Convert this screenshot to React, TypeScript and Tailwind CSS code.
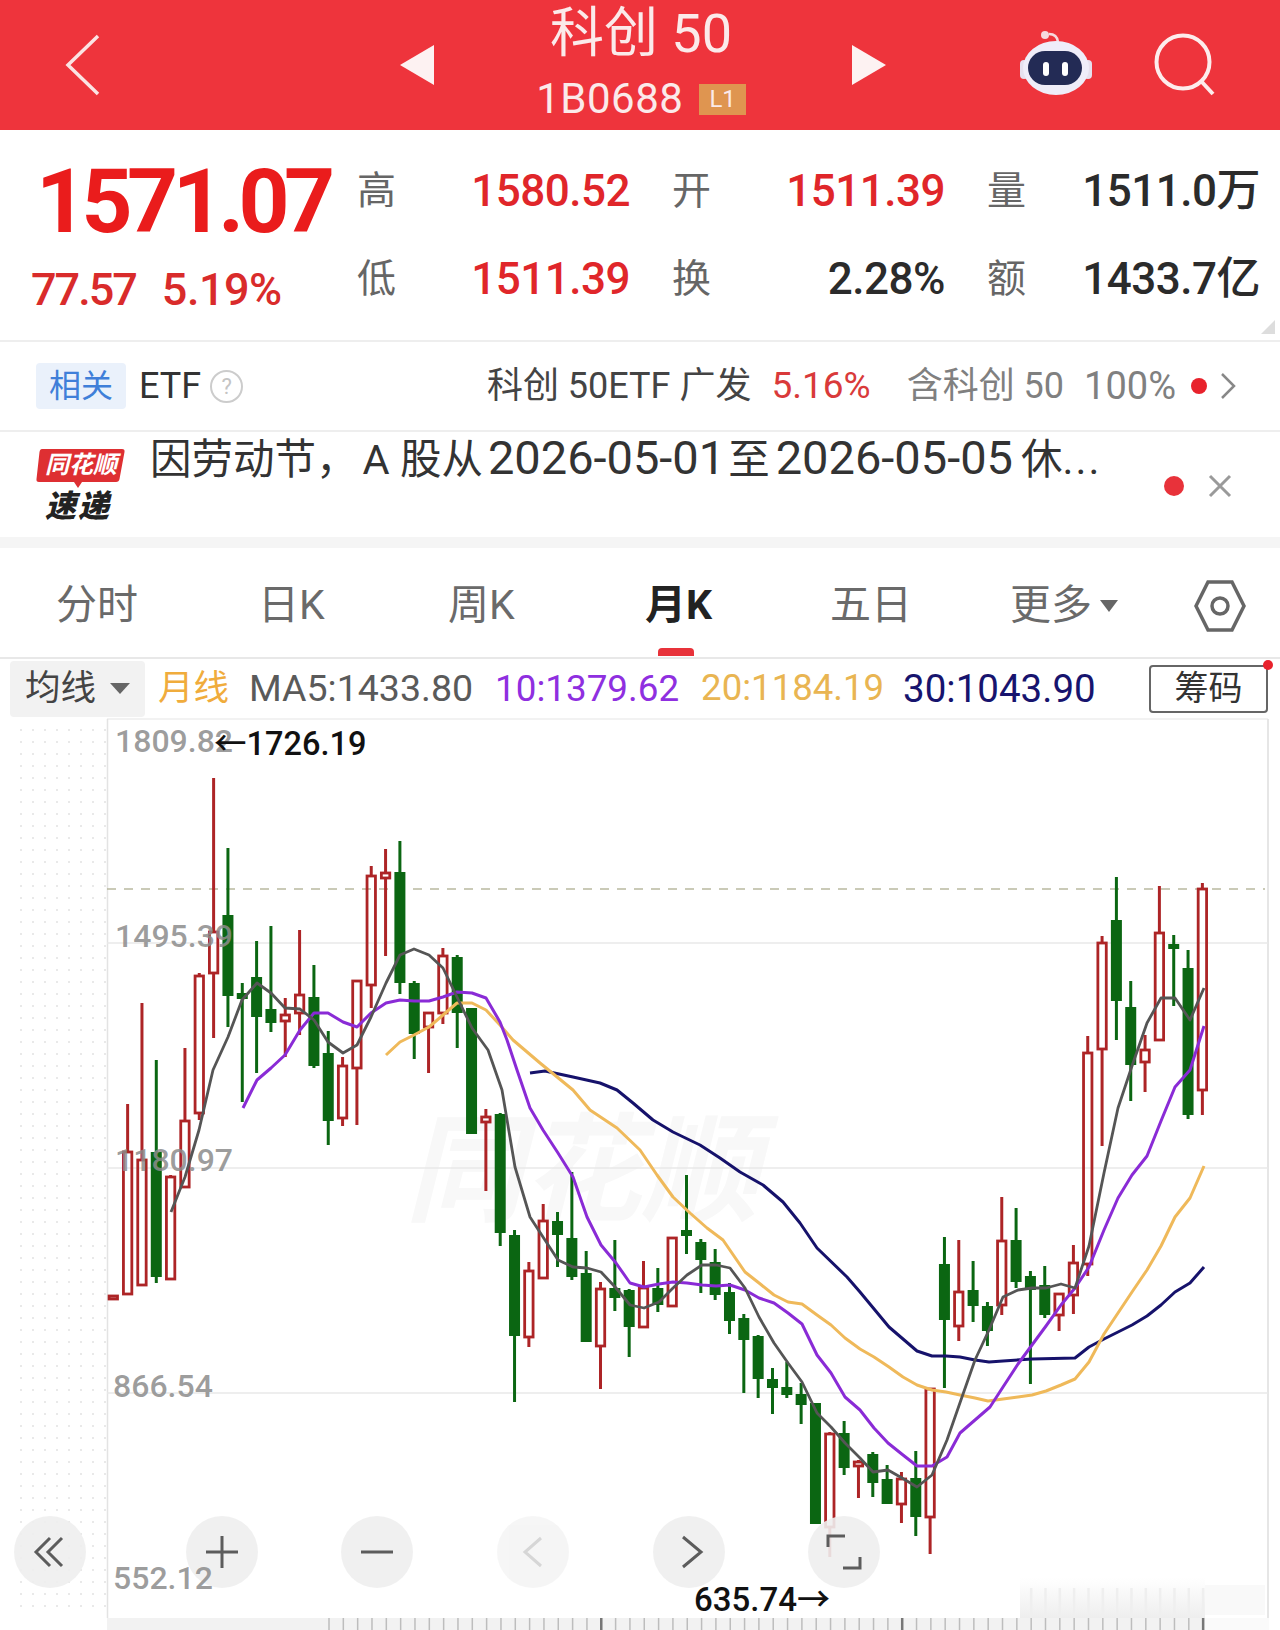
import React from 'react';

type Candle = [number, number, number, number]; // high, top, bottom, low

// up = true draws the hollow red candle, false the filled green one
const candles: Array<[boolean, ...Candle]> = [
  [true, 1296, 1296, 1299, 1299],
  [true, 1104, 1152, 1294, 1294],
  [true, 1003, 1160, 1285, 1285],
  [false, 1060, 1152, 1277, 1283],
  [true, 1175, 1177, 1279, 1279],
  [true, 1048, 1121, 1187, 1187],
  [true, 973, 976, 1113, 1120],
  [true, 778, 932, 973, 1038],
  [false, 848, 915, 996, 1027],
  [false, 983, 993, 999, 1102],
  [false, 941, 977, 1017, 1073],
  [false, 926, 1009, 1023, 1032],
  [true, 998, 1015, 1021, 1057],
  [true, 930, 995, 1013, 1035],
  [false, 965, 997, 1066, 1068],
  [false, 1031, 1053, 1121, 1145],
  [true, 1057, 1066, 1118, 1126],
  [true, 980, 981, 1068, 1125],
  [true, 866, 876, 985, 1008],
  [true, 849, 873, 878, 956],
  [false, 841, 872, 983, 994],
  [false, 981, 983, 1034, 1059],
  [true, 1013, 1013, 1027, 1073],
  [true, 948, 956, 1013, 1024],
  [false, 955, 957, 1013, 1048],
  [false, 1008, 1008, 1134, 1134],
  [true, 1109, 1117, 1122, 1191],
  [false, 1113, 1114, 1233, 1246],
  [false, 1230, 1235, 1336, 1402],
  [true, 1262, 1271, 1337, 1347],
  [true, 1204, 1221, 1278, 1278],
  [false, 1212, 1221, 1235, 1267],
  [false, 1172, 1238, 1277, 1280],
  [false, 1251, 1273, 1342, 1342],
  [true, 1282, 1289, 1346, 1389],
  [false, 1240, 1288, 1298, 1311],
  [false, 1289, 1290, 1327, 1357],
  [true, 1261, 1288, 1327, 1328],
  [false, 1268, 1288, 1305, 1312],
  [true, 1238, 1238, 1306, 1307],
  [false, 1175, 1230, 1236, 1254],
  [false, 1239, 1242, 1260, 1293],
  [false, 1249, 1262, 1295, 1300],
  [false, 1283, 1292, 1321, 1334],
  [false, 1314, 1318, 1340, 1393],
  [false, 1335, 1336, 1379, 1398],
  [false, 1368, 1379, 1388, 1414],
  [false, 1362, 1387, 1395, 1398],
  [false, 1383, 1394, 1405, 1424],
  [false, 1403, 1403, 1524, 1524],
  [true, 1432, 1434, 1527, 1557],
  [false, 1421, 1433, 1468, 1475],
  [true, 1460, 1462, 1466, 1498],
  [false, 1452, 1454, 1483, 1497],
  [false, 1465, 1479, 1504, 1504],
  [true, 1472, 1479, 1504, 1523],
  [false, 1451, 1478, 1517, 1536],
  [true, 1388, 1389, 1517, 1554],
  [false, 1237, 1264, 1320, 1388],
  [true, 1240, 1292, 1326, 1341],
  [false, 1261, 1290, 1306, 1322],
  [false, 1302, 1306, 1331, 1346],
  [true, 1197, 1241, 1305, 1315],
  [false, 1208, 1240, 1282, 1288],
  [false, 1271, 1276, 1290, 1384],
  [false, 1266, 1285, 1315, 1318],
  [true, 1294, 1294, 1315, 1331],
  [true, 1245, 1263, 1295, 1314],
  [true, 1036, 1053, 1264, 1276],
  [true, 936, 943, 1049, 1146],
  [false, 877, 920, 1001, 1040],
  [false, 981, 1007, 1065, 1101],
  [true, 1035, 1050, 1062, 1092],
  [true, 886, 933, 1040, 1040],
  [false, 935, 944, 949, 1006],
  [false, 950, 968, 1115, 1119],
  [true, 883, 889, 1090, 1115],
];

const ma5 =
  '171,1212 185,1177 199,1130 213,1070 228,1037 242,1000 257,983 271,993 285,1008 300,1009 314,1020 328,1042 343,1053 357,1045 371,1017 386,983 400,955 414,949 429,955 443,968 457,997 472,1028 488,1050 502,1090 515,1167 530,1217 543,1237 558,1260 573,1267 587,1268 601,1272 616,1288 630,1305 644,1308 659,1302 673,1288 687,1275 702,1265 716,1265 730,1268 745,1288 759,1317 774,1343 788,1363 802,1382 817,1413 831,1427 845,1443 860,1458 873,1472 888,1470 902,1478 917,1487 932,1475 947,1440 962,1397 975,1360 989,1330 1003,1297 1018,1290 1032,1288 1046,1288 1061,1284 1075,1288 1089,1246 1104,1173 1118,1108 1132,1066 1147,1023 1161,998 1175,998 1190,1020 1204,988';
const ma10 =
  '243,1108 257,1080 271,1068 285,1055 300,1030 314,1013 328,1013 343,1022 357,1027 371,1013 386,1003 400,1000 414,1001 429,1001 443,997 457,992 472,993 486,998 500,1022 507,1040 517,1070 530,1108 543,1130 558,1153 573,1177 587,1217 601,1245 616,1263 630,1283 644,1287 659,1284 673,1282 687,1283 702,1285 716,1286 730,1285 745,1290 759,1298 774,1303 788,1313 802,1324 817,1355 831,1373 845,1397 860,1410 874,1428 888,1443 903,1455 917,1466 932,1466 947,1457 960,1433 975,1420 990,1407 1003,1387 1018,1364 1032,1345 1046,1326 1061,1305 1075,1288 1089,1267 1104,1230 1118,1198 1132,1175 1147,1156 1161,1121 1175,1087 1190,1070 1204,1026';
const ma20 =
  '386,1055 400,1042 414,1035 429,1027 443,1015 457,1003 472,1003 486,1010 500,1025 513,1040 540,1063 573,1090 590,1110 617,1128 640,1150 657,1175 673,1197 690,1213 707,1228 723,1240 745,1272 759,1283 774,1295 788,1302 802,1304 817,1315 831,1325 845,1338 860,1349 874,1357 889,1367 903,1377 917,1385 932,1390 946,1392 960,1395 975,1398 988,1401 1003,1399 1018,1397 1032,1395 1046,1391 1061,1385 1075,1379 1089,1362 1104,1334 1118,1313 1132,1292 1147,1270 1161,1246 1175,1217 1190,1198 1204,1166';
const ma30 =
  '530,1073 545,1071 573,1077 600,1083 617,1090 633,1103 653,1120 673,1132 700,1145 720,1158 740,1172 763,1185 783,1202 800,1223 817,1248 847,1277 860,1292 889,1327 917,1351 932,1356 946,1356 960,1357 975,1360 989,1362 1003,1361 1032,1359 1075,1358 1089,1347 1104,1339 1118,1332 1132,1325 1147,1316 1161,1305 1175,1292 1190,1283 1204,1267';

const candleX = (i: number) => 113.3 + i * 14.33;
const ticks = Array.from({ length: 62 }, (_, i) => 329 + i * 14.33);

function StatCell({ label, value, red }: { label: string; value: string; red?: boolean }) {
  return (
    <div className="flex items-center justify-between">
      <span className="text-[39px] text-[#666666]">{label}</span>
      <span
        className={`text-[44px] font-medium tracking-[-0.5px] ${red ? 'text-[#e0262a]' : 'text-[#2b2b2b]'}`}
      >
        {value}
      </span>
    </div>
  );
}

function Robot() {
  return (
    <svg width="84" height="72" viewBox="1015 28 84 72" className="mt-[2px]">
      <circle cx="1045" cy="33" r="4" fill="#f6d9de" />
      <path d="M1049 32q8 0 9 8" stroke="#f6d9de" strokeWidth="2.5" fill="none" />
      <rect x="1020" y="58" width="8" height="19" rx="4" fill="#e6e0ee" />
      <rect x="1084" y="58" width="8" height="19" rx="4" fill="#e6e0ee" />
      <ellipse cx="1056" cy="66" rx="33" ry="27" fill="#efedf9" />
      <rect x="1028" y="49" width="54" height="34" rx="17" fill="#232b55" />
      <rect x="1043" y="60" width="6" height="14" rx="3" fill="#ffffff" />
      <rect x="1062" y="60" width="6" height="14" rx="3" fill="#ffffff" />
    </svg>
  );
}

function Logo() {
  return (
    <div className="relative h-[76px] w-[90px] shrink-0">
      <svg width="90" height="44" viewBox="0 0 90 44" className="absolute left-0 top-0">
        <path
          d="M6 2h80q3 0 2.500 3l-5 27q-.5 3-3.500 3H46l-4 6-4-6H3q-3 0-2.500-3l3-27q.5-3 2.500-3z"
          fill="#de2f32"
        />
      </svg>
      <span className="absolute left-[9px] top-[2px] whitespace-nowrap text-[24px] font-bold italic leading-[32px] text-white">
        同花顺
      </span>
      <span className="absolute left-[9px] top-[42px] whitespace-nowrap text-[31px] font-black italic leading-[36px] tracking-[2px] text-[#222222]">
        速递
      </span>
    </div>
  );
}

function ChartSvg() {
  return (
    <svg
      width="1280"
      height="912"
      viewBox="0 718 1280 912"
      className="absolute left-0 top-0"
    >
      <defs>
        <linearGradient id="blur" x1="0" y1="0" x2="0" y2="1">
          <stop offset="0" stopColor="#ffffff" />
          <stop offset="1" stopColor="#eeeeee" />
        </linearGradient>
      </defs>
      <rect x="107" y="1618" width="1098" height="12" fill="#f2f2f2" />
      <rect x="1205" y="1618" width="64" height="12" fill="#fafafa" />
      {ticks.map((x, i) => (
        <line
          key={x}
          x1={x}
          x2={x}
          y1="1618"
          y2="1630"
          stroke={i % 21 === 19 ? '#777777' : '#bdbdbd'}
          strokeWidth={i % 21 === 19 ? 2.5 : 1.5}
        />
      ))}
      <rect x="1020" y="1578" width="185" height="40" fill="url(#blur)" />
      <rect x="1205" y="1585" width="60" height="30" fill="#f9f9f9" />
      {ticks
        .filter((x) => x > 1025 && x < 1205)
        .map((x) => (
          <line key={x} x1={x} x2={x} y1="1588" y2="1618" stroke="#efefef" strokeWidth="2.500" />
        ))}
      <line x1="107" x2="1268" y1="719" y2="719" stroke="#eeeeee" strokeWidth="1.5" />
      <line x1="107.500" x2="107.500" y1="719" y2="1618" stroke="#e3e3e3" strokeWidth="1.5" />
      <line x1="1268" x2="1268" y1="719" y2="1618" stroke="#e6e6e6" strokeWidth="2" />
      {[943, 1168, 1393].map((y) => (
        <line key={y} x1="107" x2="1268" y1={y} y2={y} stroke="#e8e8e8" strokeWidth="1.5" />
      ))}
      <line
        x1="107"
        x2="1265"
        y1="889"
        y2="889"
        stroke="#b9b9a0"
        strokeWidth="1.5"
        strokeDasharray="9 8"
      />
      {candles.map(([up, high, top, bottom, low], i) => {
        const x = candleX(i);
        const color = up ? '#ad2426' : '#0b6612';
        return (
          <g key={i}>
            <line x1={x} x2={x} y1={high} y2={top} stroke={color} strokeWidth="3" />
            <line x1={x} x2={x} y1={bottom} y2={low} stroke={color} strokeWidth="3" />
            {up ? (
              <rect
                x={x - 4.2}
                y={top}
                width="8.400"
                height={bottom - top}
                fill="none"
                stroke={color}
                strokeWidth="2.800"
              />
            ) : (
              <rect x={x - 5.5} y={top} width="11" height={bottom - top} fill={color} />
            )}
          </g>
        );
      })}
      <polyline points={ma30} fill="none" stroke="#16126b" strokeWidth="3" strokeLinejoin="round" />
      <polyline points={ma20} fill="none" stroke="#efb95a" strokeWidth="3" strokeLinejoin="round" />
      <polyline points={ma10} fill="none" stroke="#8a2bd6" strokeWidth="3" strokeLinejoin="round" />
      <polyline points={ma5} fill="none" stroke="#555555" strokeWidth="2.800" strokeLinejoin="round" />
    </svg>
  );
}

function RoundBtn({ className, children }: { className?: string; children: React.ReactNode }) {
  return (
    <div
      className={`flex h-[72px] w-[72px] shrink-0 items-center justify-center rounded-full bg-[#eeeeee]/90 ${className ?? ''}`}
    >
      <svg width="40" height="40" viewBox="0 0 40 40" fill="none" stroke="#5c5c5c" strokeWidth="3">
        {children}
      </svg>
    </div>
  );
}

export default function App() {
  return (
    <div className="h-[1630px] w-[1280px] overflow-hidden bg-white font-[Roboto,'Noto_Sans_CJK_SC',sans-serif]">
      {/* top bar */}
      <header className="flex h-[130px] items-center bg-[#ee343c] pl-[64px]">
        <svg width="38" height="62" viewBox="0 0 38 62" fill="none" stroke="#fbe3e3" strokeWidth="3.500" className="shrink-0">
          <path d="M34 2L4 31l30 29" />
        </svg>
        <svg width="34" height="40" viewBox="0 0 34 40" className="ml-[298px] shrink-0">
          <path d="M34 0v40L0 20z" fill="#fdf2f2" />
        </svg>
        <div className="ml-[65px] mr-[69px] flex w-[284px] shrink-0 flex-col items-center pb-[5px]">
          <div className="text-[54px] leading-[60px] text-[#fbeaea]">科创 50</div>
          <div className="mt-[13px] flex items-center gap-[16px]">
            <span className="text-[42px] leading-[44px] tracking-[0.5px] text-[#fbeaea]">1B0688</span>
            <span className="bg-[#df9550] px-[10px] text-[24px] leading-[31px] text-[#fbeaea]">L1</span>
          </div>
        </div>
        <svg width="34" height="40" viewBox="0 0 34 40" className="shrink-0">
          <path d="M0 0v40l34-20z" fill="#fdf2f2" />
        </svg>
        <div className="ml-[129px] shrink-0">
          <Robot />
        </div>
        <svg width="64" height="64" viewBox="0 0 64 64" fill="none" stroke="#fdecec" strokeWidth="4" className="ml-[55px] shrink-0">
          <circle cx="29" cy="29" r="26.500" />
          <path d="M47 48l12 13" />
        </svg>
      </header>

      {/* quote block */}
      <section className="relative flex h-[212px] border-b-2 border-[#eeeeee] pt-[18px]">
        <div className="w-[357px] shrink-0 pl-[31px]">
          <div className="pl-[5px] pt-[2px] text-[89px] font-bold leading-[104px] tracking-[-5.5px] text-[#ea1c1c]">
            1571.07
          </div>
          <div className="mt-[10px] flex gap-[26px] text-[45px] font-medium leading-[52px] text-[#d92b2b]">
            <span className="tracking-[-2px]">77.57</span>
            <span className="tracking-[-0.5px]">5.19%</span>
          </div>
        </div>
        <div className="-mt-[1px] grid h-[176px] w-[903px] grid-cols-3 grid-rows-2 gap-x-[42px]">
          <StatCell label="高" value="1580.52" red />
          <StatCell label="开" value="1511.39" red />
          <StatCell label="量" value="1511.0万" />
          <StatCell label="低" value="1511.39" red />
          <StatCell label="换" value="2.28%" />
          <StatCell label="额" value="1433.7亿" />
        </div>
        <div className="absolute bottom-[6px] right-[5px] h-0 w-0 border-b-[14px] border-l-[14px] border-b-[#dddddd] border-l-transparent" />
      </section>

      {/* related etf */}
      <section className="flex h-[90px] items-center border-b-2 border-[#eeeeee] pl-[36px] pr-[44px]">
        <span className="rounded-[4px] bg-[#eaf1fb] px-[13px] text-[32px] leading-[46px] text-[#3f7fd9]">
          相关
        </span>
        <span className="ml-[13px] text-[36px] text-[#333333]">ETF</span>
        <span className="ml-[9px] flex h-[33px] w-[33px] items-center justify-center rounded-full border-2 border-[#cccccc] text-[22px] text-[#c4c4c4]">
          ?
        </span>
        <span className="ml-auto text-[36px] text-[#444444]">科创 50ETF 广发</span>
        <span className="ml-[20px] text-[37px] text-[#d93a3a]">5.16%</span>
        <span className="ml-[36px] text-[36px] text-[#808080]">含科创 50</span>
        <span className="ml-[20px] text-[38px] text-[#808080]">100%</span>
        <span className="ml-[15px] h-[16px] w-[16px] rounded-full bg-[#e8222c]" />
        <svg width="16" height="28" viewBox="0 0 16 28" fill="none" stroke="#888888" strokeWidth="2.500" className="ml-[13px]">
          <path d="M2 2l12 12L2 26" />
        </svg>
      </section>

      {/* news ticker */}
      <section className="flex h-[105px] items-start pl-[36px] pr-[48px] pt-[15px]">
        <Logo />
        <p className="-mt-[13px] ml-[24px] w-[990px] whitespace-nowrap text-[41.500px] leading-[52px] text-[#333333]">
          因劳动节，<span className="ml-[5px]">A 股从</span>
          <span className="ml-[5px] text-[47px] leading-none">2026-05-01</span>
          <span className="ml-[3px]">至</span>
          <span className="ml-[6px] text-[47px] leading-none">2026-05-05</span>
          <span className="ml-[8px]">休</span>
          <span className="tracking-[2px]">...</span>
        </p>
        <span className="ml-auto mt-[29px] h-[20px] w-[20px] rounded-full bg-[#e8323a]" />
        <svg width="24" height="24" viewBox="0 0 24 24" fill="none" stroke="#9a9a9a" strokeWidth="3" className="ml-[24px] mt-[27px]">
          <path d="M2 2l20 20M22 2L2 22" />
        </svg>
      </section>
      <div className="h-[11px] bg-[#f5f5f5]" />

      {/* period tabs */}
      <nav className="relative flex h-[111px] items-center border-b-2 border-[#e8e8e8] pt-[6px] text-[41px] text-[#6a6a6a]">
        <span className="ml-[56px] w-[202px]">分时</span>
        <span className="w-[190px]">日K</span>
        <span className="w-[197px]">周K</span>
        <span className="w-[185px] font-bold text-[#222222]">月K</span>
        <span className="w-[180px]">五日</span>
        <span>更多</span>
        <span className="ml-[8px] h-0 w-0 border-x-[9px] border-t-[12px] border-x-transparent border-t-[#666666]" />
        <svg width="52" height="56" viewBox="0 0 52 56" fill="none" stroke="#666666" strokeWidth="3.500" className="ml-[76px]">
          <path d="M14 4h24l12 24-12 24H14L2 28z" />
          <circle cx="26" cy="28" r="8" />
        </svg>
        <span className="absolute bottom-[1px] left-[658px] h-[8px] w-[36px] rounded-t-[4px] bg-[#e8323a]" />
      </nav>

      {/* moving average legend */}
      <section className="flex h-[59px] items-center pl-[10px] text-[35.500px]">
        <div className="flex h-[56px] w-[135px] items-center rounded-[4px] bg-[#f2f2f2] pl-[15px] text-[#444444]">
          均线
          <span className="ml-[14px] h-0 w-0 border-x-[10px] border-t-[11px] border-x-transparent border-t-[#666666]" />
        </div>
        <span className="ml-[13px] text-[#f0ac3c]">月线</span>
        <span className="ml-[20px] text-[37.500px] text-[#5a5a5a]">MA5:1433.80</span>
        <span className="ml-[22px] text-[36.800px] text-[#8f2fe0]">10:1379.62</span>
        <span className="ml-[22px] text-[36.600px] text-[#e9b552]">20:1184.19</span>
        <span className="ml-[19px] text-[38.500px] text-[#17146e]">30:1043.90</span>
        <div className="relative ml-auto mr-[12px] flex h-[48px] w-[119px] items-center justify-center rounded-[4px] border-2 border-[#666666] text-[34px] text-[#333333]">
          筹码
          <span className="absolute right-[-7px] top-[-7px] h-[10px] w-[10px] rounded-full bg-[#e8222c]" />
        </div>
      </section>

      {/* candlestick chart */}
      <section className="relative h-[912px]">
        <div className="absolute bottom-[20px] left-[15px] top-[6px] w-[92px] bg-[radial-gradient(#e9e9e9_1.500px,transparent_1.500px)] bg-[length:12px_12px]" />
        <div className="absolute left-[405px] top-[384px] whitespace-nowrap text-[118px] font-bold italic leading-[140px] text-[#f8f8f8]">
          同花顺
        </div>
        <ChartSvg />
        <span className="absolute left-[115px] top-[3px] text-[32px] font-medium leading-[40px] text-[#8c8c8c]/85">1809.82</span>
        <span className="absolute left-[115px] top-[198px] text-[32px] font-medium leading-[40px] text-[#8c8c8c]/85">1495.39</span>
        <span className="absolute left-[115px] top-[422px] text-[32px] font-medium leading-[40px] text-[#8c8c8c]/85">1180.97</span>
        <span className="absolute left-[113px] top-[648px] text-[32px] font-medium leading-[40px] text-[#8c8c8c]/85">866.54</span>
        <span className="absolute left-[113px] top-[840px] z-10 text-[32px] font-medium leading-[40px] text-[#8c8c8c]/85">552.12</span>
        <span className="absolute left-[214px] top-[6px] whitespace-nowrap text-[32.500px] font-medium leading-[40px] text-[#111111]">←1726.19</span>
        <span className="absolute left-[694px] top-[862px] z-10 whitespace-nowrap text-[33px] font-medium leading-[40px] text-[#111111]">635.74→</span>
        <div className="absolute left-[14px] top-[798px] flex gap-[83px]">
          <RoundBtn className="mr-[17px]">
            <path d="M20 6L6 20l14 14M32 6L18 20l14 14" />
          </RoundBtn>
          <RoundBtn>
            <path d="M20 4v32M4 20h32" />
          </RoundBtn>
          <RoundBtn>
            <path d="M4 20h32" />
          </RoundBtn>
          <RoundBtn className="ml-[1px] opacity-60">
            <path d="M28 6L12 20l16 14" stroke="#bbbbbb" />
          </RoundBtn>
          <RoundBtn className="ml-[1px]">
            <path d="M14 5l18 15-18 15" />
          </RoundBtn>
          <RoundBtn>
            <path d="M4 15V4h17M36 25v11H19" />
          </RoundBtn>
        </div>
      </section>
    </div>
  );
}
